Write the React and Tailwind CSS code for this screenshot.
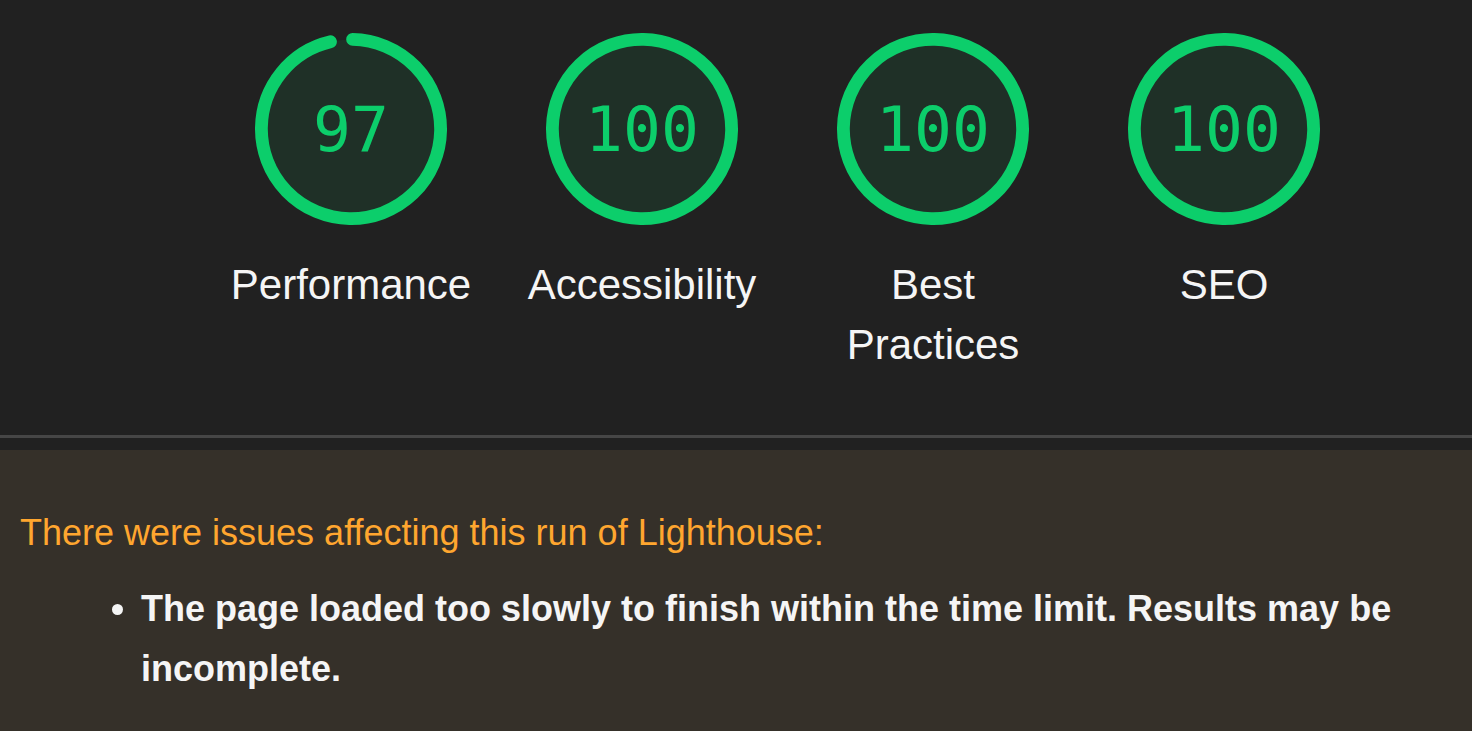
import React from 'react'

const scores = [
  { label: 'Performance', score: 97 },
  { label: 'Accessibility', score: 100 },
  { label: 'Best Practices', score: 100 },
  { label: 'SEO', score: 100 },
]

const Gauge = ({ score }) => {
  const r = 56
  const sw = 8
  const circ = 2 * Math.PI * r
  let arc = (score / 100) * circ - sw / 2
  if (score === 100) arc = circ
  const rot = -90 + ((0.25 * (sw / 2)) / circ) * 360

  return (
    <div className="relative w-[192px] h-[192px]">
      <svg viewBox="0 0 120 120" className="w-full h-full">
        <circle cx="60" cy="60" r={r} fill="#1f3027" stroke="none" />
        <circle
          cx="60"
          cy="60"
          r={r}
          fill="none"
          stroke="#0cce6b"
          strokeWidth={sw}
          strokeLinecap="round"
          strokeDasharray={`${arc} ${circ}`}
          transform={`rotate(${rot} 60 60)`}
        />
      </svg>
      <div className="absolute inset-0 flex items-center justify-center text-[#0cce6b] text-[63px] leading-none font-['DejaVu_Sans_Mono',monospace]">
        {score}
      </div>
    </div>
  )
}

const App = () => {
  return (
    <div className="min-h-[731px] bg-[#212121] font-['Liberation_Sans',Arial,sans-serif] flex flex-col">
      <div className="flex pl-[226px] pt-[33px] gap-[41px] h-[435px]">
        {scores.map((s) => (
          <div key={s.label} className="w-[250px] flex flex-col items-center">
            <Gauge score={s.score} />
            <div className="mt-[30px] text-center text-[42px] leading-[60px] text-[#f5f5f5]">
              {s.label}
            </div>
          </div>
        ))}
      </div>

      <div className="h-[3px] bg-[#464646]" />
      <div className="h-[12px]" />

      {/* warnings */}
      <div className="flex-1 bg-[#353029] px-[20px] pt-[53px] pb-8">
        <div className="text-[#ffa62f] text-[36px] leading-[60px]">
          There were issues affecting this run of Lighthouse:
        </div>
        <ul className="list-disc pl-[121px] mt-[16px] pr-[20px]">
          <li className="text-[#f5f5f5] font-bold text-[36px] leading-[60px]">
            The page loaded too slowly to finish within the time limit. Results may be incomplete.
          </li>
        </ul>
      </div>
    </div>
  )
}

export default App
